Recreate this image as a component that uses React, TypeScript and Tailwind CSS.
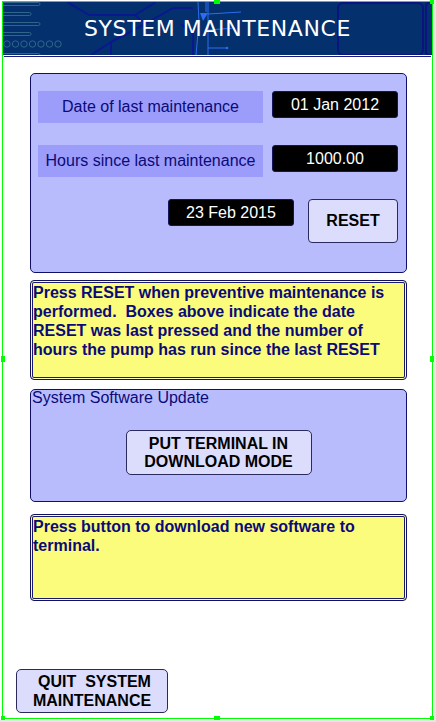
const navy = "text-[#0a0a78]";

function HeaderArt() {
  return (
    <svg
      className="absolute inset-0"
      width="429"
      height="53"
      viewBox="0 0 429 53"
      fill="none"
    >
      {/* left tech bars */}
      <g stroke="#2f6688" strokeWidth="1">
        <rect x="-2" y="0.5" width="39" height="3" rx="1.5" />
        <rect x="-2" y="10.5" width="30" height="3" rx="1.5" />
        <rect x="-2" y="20.5" width="39" height="3" rx="1.5" />
        <rect x="-2" y="30.5" width="30" height="3" rx="1.5" />
        <rect x="-2" y="51.5" width="39" height="3" rx="1.5" />
        {[4, 12.5, 21, 29.5, 38, 46.5, 55].map((cx) => (
          <circle key={cx} cx={cx} cy="42" r="3.2" />
        ))}
      </g>
      {/* dark hex traces */}
      <g stroke="#0a1890" strokeWidth="2" strokeLinejoin="round">
        <polyline points="64,0 86,13 132,13 150,2" />
        <polyline points="150,2 152,0" />
        <polyline points="132,13 142,22 108,40 108,53" />
        <polyline points="142,22 170,6 190,6" />
        <polyline points="108,40 88,53" />
        <polyline points="178,22 190,32 190,53" />
      </g>
      {/* bright blue traces */}
      <g stroke="#2d6cf0" strokeWidth="1">
        <polyline points="195,0 196,20 193,53" />
        <polyline points="205,0 205,53" />
        <polyline points="205,12 238,10" />
        <polyline points="205,28 232,26" />
        <polyline points="205,46 224,46" />
        <polyline points="203,0 203,10" />
      </g>
      <polygon points="197,11 205,11 200,19" fill="#2d6cf0" />
      <circle cx="224" cy="46" r="1.3" fill="#2d6cf0" />
      {/* right frames */}
      <g stroke="#0a1480" strokeWidth="2">
        <rect x="335" y="1" width="85" height="52" rx="5" />
        <rect x="423" y="1" width="10" height="52" rx="3" />
      </g>
    </svg>
  );
}

function YellowNote({ h, children }: { h: string; children: React.ReactNode }) {
  return (
    <div
      className={`ml-[27px] w-[377px] ${h} rounded-[4px] border border-[#10105e] bg-[#fcfc7c] pl-[2px] pr-[2px] pt-[2px] shadow-[inset_0_0_0_1px_#ffffc8,inset_0_0_0_2px_#1a1a6a] text-[16px] font-bold leading-[19px] ${navy}`}
    >
      {children}
    </div>
  );
}

function ValueBox({ children }: { children: React.ReactNode }) {
  return (
    <div className="flex h-[27px] w-[126px] items-center justify-center rounded-[3px] border border-[#14145a] bg-black text-[16px] text-white">
      {children}
    </div>
  );
}

function Label({ children }: { children: React.ReactNode }) {
  return (
    <div
      className={`flex h-[32px] w-[225px] items-center justify-center bg-[#9c9cfa] text-[16px] ${navy}`}
    >
      {children}
    </div>
  );
}

export default function App() {
  return (
    <div
      className="relative h-[722px] w-[436px] bg-[#e4e4e4]"
      style={{ fontFamily: '"Liberation Sans", Arial, sans-serif' }}
    >
      <div className="h-[720px] w-[434px] bg-white pl-[2px] pt-[1px]">
        <div className="relative h-[718px] w-[431px] border border-[#00ff00] bg-white">
          {/* header */}
          <div className="relative flex h-[53px] items-center justify-center overflow-hidden bg-[#04306e]">
            <HeaderArt />
            <h1
              className="relative text-[22px] tracking-[0.6px] text-white"
              style={{ fontFamily: '"DejaVu Sans", Verdana, sans-serif' }}
            >
              SYSTEM MAINTENANCE
            </h1>
          </div>
          <div className="mx-[1px] mt-[1px] h-[1px] bg-[#1a1a7a]" />

          {/* maintenance panel */}
          <div className="ml-[27px] mt-[16px] h-[200px] w-[377px] rounded-[5px] border border-[#10106a] bg-[#b9bcfc] pl-[7px] pr-[8px] pt-[17px]">
            <div className="flex items-start justify-between">
              <Label>Date of last maintenance</Label>
              <ValueBox>01 Jan 2012</ValueBox>
            </div>
            <div className="mt-[22px] flex items-start justify-between">
              <Label>Hours since last maintenance</Label>
              <ValueBox>1000.00</ValueBox>
            </div>
            <div className="mt-[22px] flex items-start justify-end gap-[14px]">
              <ValueBox>23 Feb 2015</ValueBox>
              <button className="flex h-[44px] w-[90px] items-center justify-center rounded-[4px] border border-[#2a2a5e] bg-[#dcdcfc] text-[16px] font-bold text-black">
                RESET
              </button>
            </div>
          </div>

          <div className="mt-[7px]">
            <YellowNote h="h-[100px]">
              Press RESET when preventive maintenance is performed.{"\u00a0 "}Boxes above indicate the date RESET was last pressed and the number of hours the pump has run since the last RESET
            </YellowNote>
          </div>

          {/* software update panel */}
          <div className="ml-[27px] mt-[9px] h-[113px] w-[377px] rounded-[5px] border border-[#10106a] bg-[#b9bcfc]">
            <div className={`pl-[1px] text-[16px] leading-[16px] ${navy}`}>
              System Software Update
            </div>
            <div className="mt-[24px] flex justify-center">
              <button className="flex h-[45px] w-[186px] flex-col items-center justify-center rounded-[5px] border border-[#2a2a5e] bg-[#dcdcfc] text-[16px] font-bold leading-[18px] text-black">
                <span>PUT TERMINAL IN</span>
                <span>DOWNLOAD MODE</span>
              </button>
            </div>
          </div>

          <div className="mt-[12px]">
            <YellowNote h="h-[87px]">
              Press button to download new software to terminal.
            </YellowNote>
          </div>

          <button className="ml-[13px] mt-[68px] flex h-[44px] w-[152px] flex-col items-center justify-center rounded-[5px] border border-[#2a2a5e] bg-[#dcdcfc] text-[16px] font-bold leading-[19px] text-black">
            <span className="whitespace-pre pl-[5px]">QUIT  SYSTEM</span>
            <span>MAINTENANCE</span>
          </button>

          {/* selection handles */}
          <div className="absolute left-[211px] top-[-2px] h-[4px] w-[6px] bg-[#00ff00]" />
          <div className="absolute right-[-2px] top-[-2px] h-[4px] w-[4px] bg-[#00ff00]" />
          <div className="absolute left-[-2px] top-[354px] h-[6px] w-[4px] bg-[#00ff00]" />
          <div className="absolute right-[-2px] top-[354px] h-[6px] w-[4px] bg-[#00ff00]" />
          <div className="absolute bottom-[-2px] left-[211px] h-[4px] w-[6px] bg-[#00ff00]" />
          <div className="absolute bottom-[-2px] left-[-2px] h-[4px] w-[4px] bg-[#00ff00]" />
          <div className="absolute bottom-[-2px] right-[-2px] h-[4px] w-[4px] bg-[#00ff00]" />
        </div>
      </div>
    </div>
  );
}
